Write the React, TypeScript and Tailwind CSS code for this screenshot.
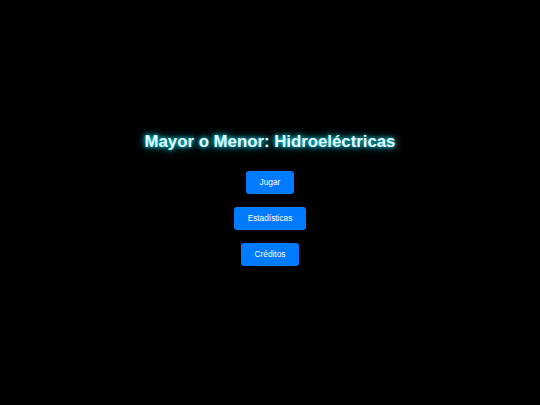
export default function App() {
  const buttons = ["Jugar", "Estadísticas", "Créditos"];

  return (
    <div className="flex h-screen w-full flex-col items-center justify-center bg-black font-['Liberation_Sans',Arial,sans-serif]">
      <h1 className="mt-[-7px] text-[16.8px] font-bold leading-[20px] text-[#eaffff] [text-shadow:0_0_4px_#00e5ff,0_0_9px_#00bcd4]">
        Mayor o Menor: Hidroeléctricas
      </h1>
      <div className="mt-[19px] flex flex-col items-center gap-[13px]">
        {buttons.map((label) => (
          <button
            key={label}
            className="h-[23px] rounded-[3px] bg-[#007bff] px-[13.5px] text-[8.3px] leading-[23px] text-white"
          >
            {label}
          </button>
        ))}
      </div>
    </div>
  );
}
